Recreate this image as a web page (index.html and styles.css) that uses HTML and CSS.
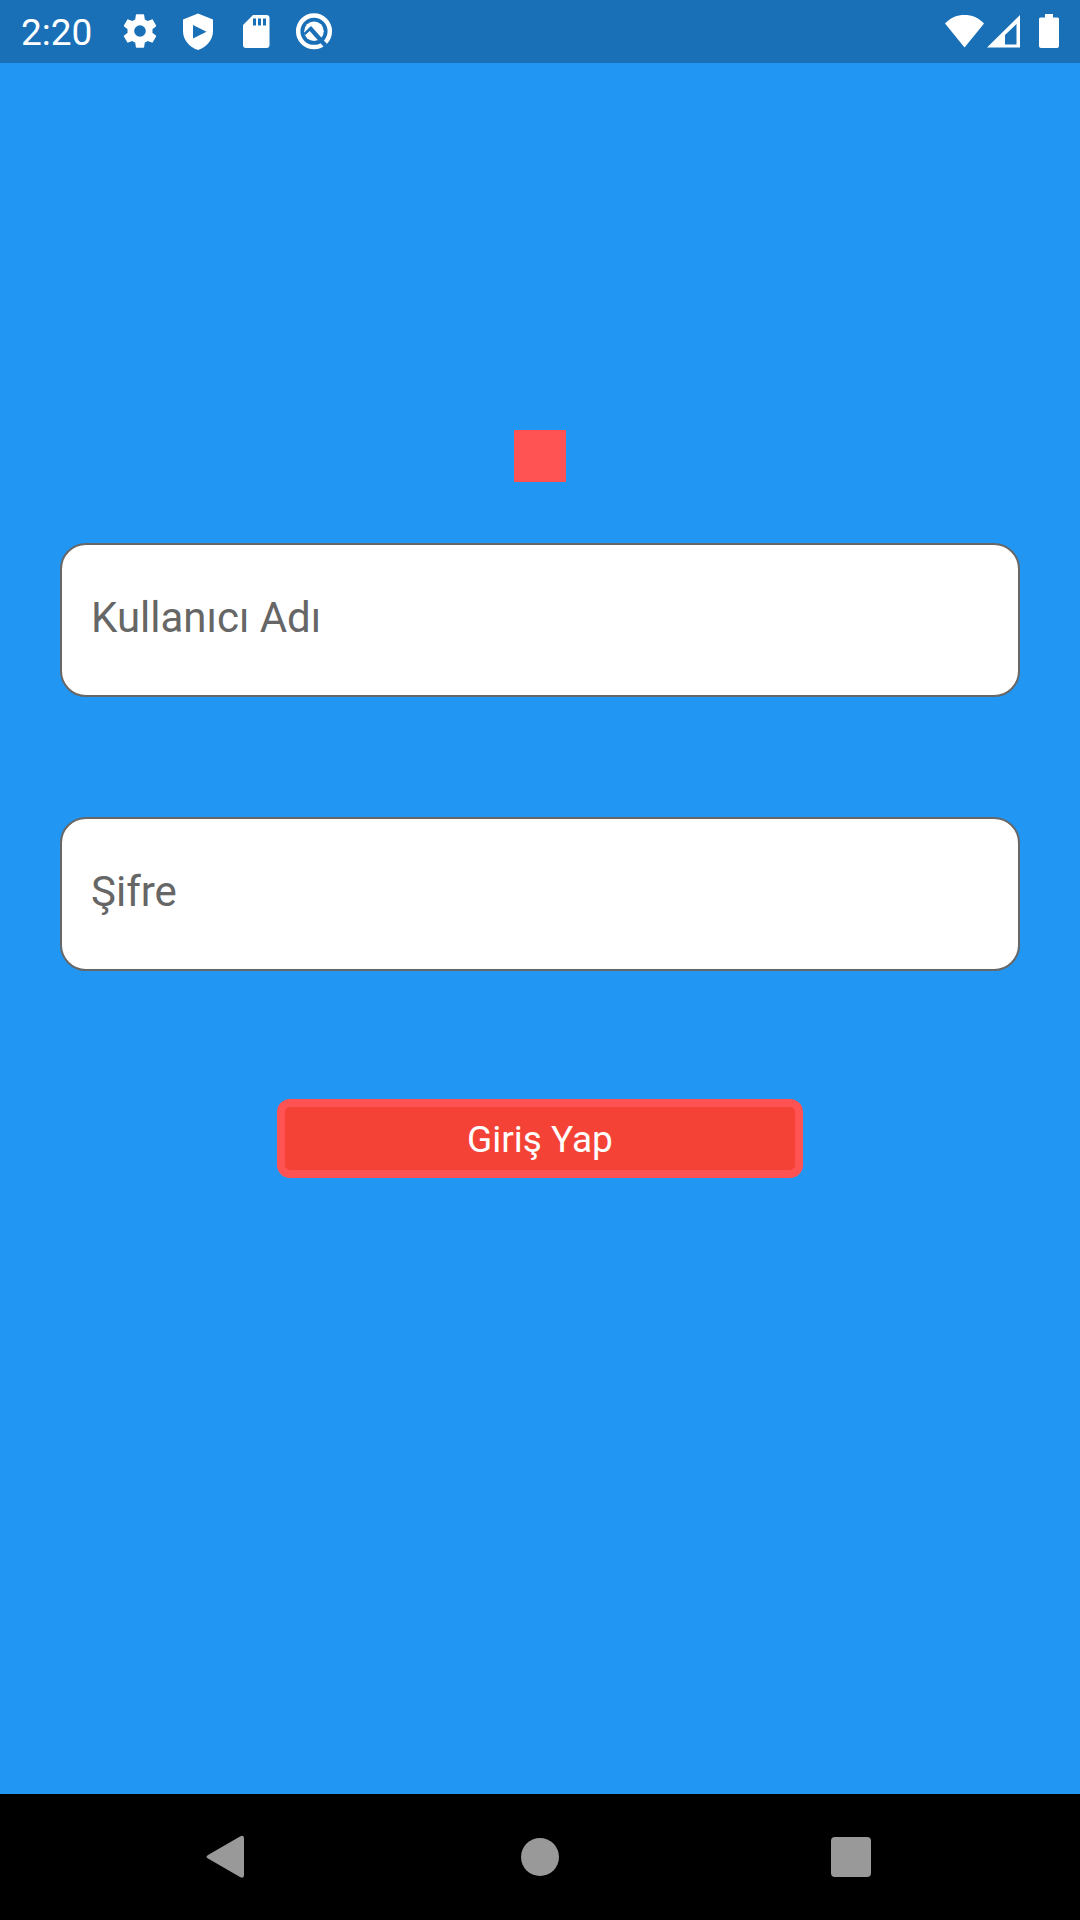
FILE: index.html
```html
<!DOCTYPE html>
<html lang="tr">
<head>
<meta charset="utf-8">
<meta name="viewport" content="width=device-width, initial-scale=1">
<title>Giriş Yap</title>
<link rel="stylesheet" href="styles.css">
</head>
<body>
<header class="status-bar">
  <time class="clock">2:20</time>
  <div class="notifications">
    <svg class="icon icon-gear" viewBox="0 0 24 24" aria-hidden="true"><path d="M19.44 12.990c.04-.32.07-.65.07-.99s-.03-.67-.07-.99l2.110-1.650c.19-.15.24-.42.12-.64l-2-3.460c-.12-.22-.39-.3-.61-.22l-2.490 1c-.52-.4-1.080-.73-1.690-.98l-.38-2.650C14.460 2.180 14.250 2 14 2h-4c-.25 0-.46.18-.49.42l-.38 2.650c-.61.25-1.170.59-1.690.98l-2.490-1c-.23-.09-.49 0-.61.22l-2 3.460c-.13.22-.07.49.12.64l2.110 1.650c-.04.32-.07.65-.07.99s.03.67.07.99l-2.110 1.650c-.19.15-.24.42-.12.64l2 3.460c.12.22.39.3.61.22l2.490-1c.52.4 1.080.73 1.690.98l.38 2.650c.03.24.24.42.49.42h4c.25 0 .46-.18.49-.42l.38-2.650c.61-.25 1.170-.59 1.690-.98l2.490 1c.23.09.49 0 .61-.22l2-3.460c.12-.22.07-.49-.12-.64zM12 15.500a3.500 3.500 0 1 1 0-7 3.500 3.500 0 0 1 0 7z"/></svg>
    <svg class="icon" viewBox="0 0 40 40" aria-hidden="true"><path fill-rule="evenodd" d="M20 2.500 35 8.500V20c0 8.500-6 16-15 19C11 36 5 28.500 5 20V8.500zM15 14v13.500L28.500 20.700z"/></svg>
    <svg class="icon" viewBox="0 0 40 40" aria-hidden="true"><path fill-rule="evenodd" d="M17 4h13.500a3 3 0 0 1 3 3v27a3 3 0 0 1-3 3h-20.500a3 3 0 0 1-3-3V14zM17 7.500v7h3v-7zM22 7.500v7h3v-7zM27 7.500v7h3v-7z"/></svg>
    <svg class="icon" viewBox="0 0 40 40" aria-hidden="true"><circle cx="20" cy="20.300" r="15.800" fill="none" stroke="#fff" stroke-width="4.500"/><circle cx="20" cy="20.300" r="9.800"/><path d="M15.500 16.500 31.500 34.500" fill="none" stroke="#1a70b7" stroke-width="4.200"/><path d="M10.500 23 17 17" fill="none" stroke="#1a70b7" stroke-width="2.500"/></svg>
  </div>
  <div class="system">
    <svg class="wifi" viewBox="0 0 40 34" aria-hidden="true"><path d="M0 9.500C5.500 3.500 12 1 19.500 1S33.500 3.500 39 9.500L19.500 33.500z"/></svg>
    <svg class="signal" viewBox="0 0 34 34" aria-hidden="true"><path fill-rule="evenodd" d="M0 33.500 33 1v32.500zM18 30.500h11.500V10L18 21z"/></svg>
    <svg class="battery" viewBox="0 0 20 34" aria-hidden="true"><path d="M6 0h8v3.500h4.500a1.500 1.500 0 0 1 1.500 1.500v27a2 2 0 0 1-2 2H2a2 2 0 0 1-2-2V5a1.500 1.500 0 0 1 1.500-1.500H6z"/></svg>
  </div>
</header>
<main class="screen">
  <div class="logo"></div>
  <form class="login">
    <input class="field" type="text" placeholder="Kullanıcı Adı" aria-label="Kullanıcı Adı" autocomplete="username">
    <input class="field" type="password" placeholder="Şifre" aria-label="Şifre" autocomplete="current-password">
    <button class="submit" type="button">Giriş Yap</button>
  </form>
</main>
<nav class="nav-bar">
  <button class="nav-button" type="button" aria-label="Geri"><svg viewBox="0 0 48 48" aria-hidden="true"><path d="M35 3.500Q39 1.500 39 5.500V42q0 4-4 2L3 25.500q-3-1.800 0-3.600z"/></svg></button>
  <button class="nav-button" type="button" aria-label="Ana ekran"><svg viewBox="0 0 48 48" aria-hidden="true"><circle cx="24" cy="24" r="19"/></svg></button>
  <button class="nav-button" type="button" aria-label="Son uygulamalar"><svg viewBox="0 0 48 48" aria-hidden="true"><rect x="4" y="4" width="40" height="40" rx="4"/></svg></button>
</nav>
</body>
</html>
```
FILE: styles.css
```css
* {
  box-sizing: border-box;
}

body {
  margin: 0;
  min-height: 100vh;
  display: flex;
  flex-direction: column;
  background: #2196f3;
  font-family: Roboto, "Noto Sans", sans-serif;
}

svg {
  display: block;
  fill: #fff;
}

.status-bar {
  display: flex;
  align-items: center;
  padding: 9px 21px 10px;
  background: #1a70b7;
  color: #fff;
}

.clock {
  padding-top: 4px;
  font-size: 37px;
  line-height: 40px;
}

.notifications {
  display: flex;
  gap: 18px;
  margin-left: 28px;
}

.icon {
  width: 40px;
  height: 40px;
}

.system {
  display: flex;
  margin-left: auto;
}

.wifi {
  width: 40px;
  height: 34px;
}

.signal {
  width: 34px;
  height: 34px;
  margin-left: 2px;
}

.battery {
  width: 20px;
  height: 34px;
  margin-left: 18px;
}

.screen {
  flex: 1;
  display: flex;
  flex-direction: column;
  align-items: center;
  padding: 367px 60px 60px;
}

.logo {
  width: 52px;
  height: 52px;
  background: #ff5252;
}

.login {
  align-self: stretch;
  display: flex;
  flex-direction: column;
  align-items: center;
  gap: 120px;
  margin-top: 61px;
}

.field {
  width: 100%;
  padding: 49px 29px 53px;
  border: 2px solid #676767;
  border-radius: 26px;
  background: #fff;
  color: #212121;
  font-family: inherit;
  font-size: 42px;
  line-height: 48px;
}

.field::placeholder {
  color: #666;
  opacity: 1;
}

.submit {
  width: 526px;
  max-width: 100%;
  margin-top: 8px;
  padding: 12px 16px 9px;
  border: 8px solid #ff5252;
  border-radius: 13px;
  background: #f44336;
  color: #fff;
  font-family: inherit;
  font-size: 37px;
  line-height: 42px;
}

.nav-bar {
  display: grid;
  grid-template-columns: repeat(3, 1fr);
  padding: 0 73px;
  background: #000;
}

.nav-button {
  display: flex;
  justify-content: center;
  padding: 39px 0;
  border: 0;
  background: none;
}

.nav-button svg {
  width: 48px;
  height: 48px;
  fill: #999;
}
```
